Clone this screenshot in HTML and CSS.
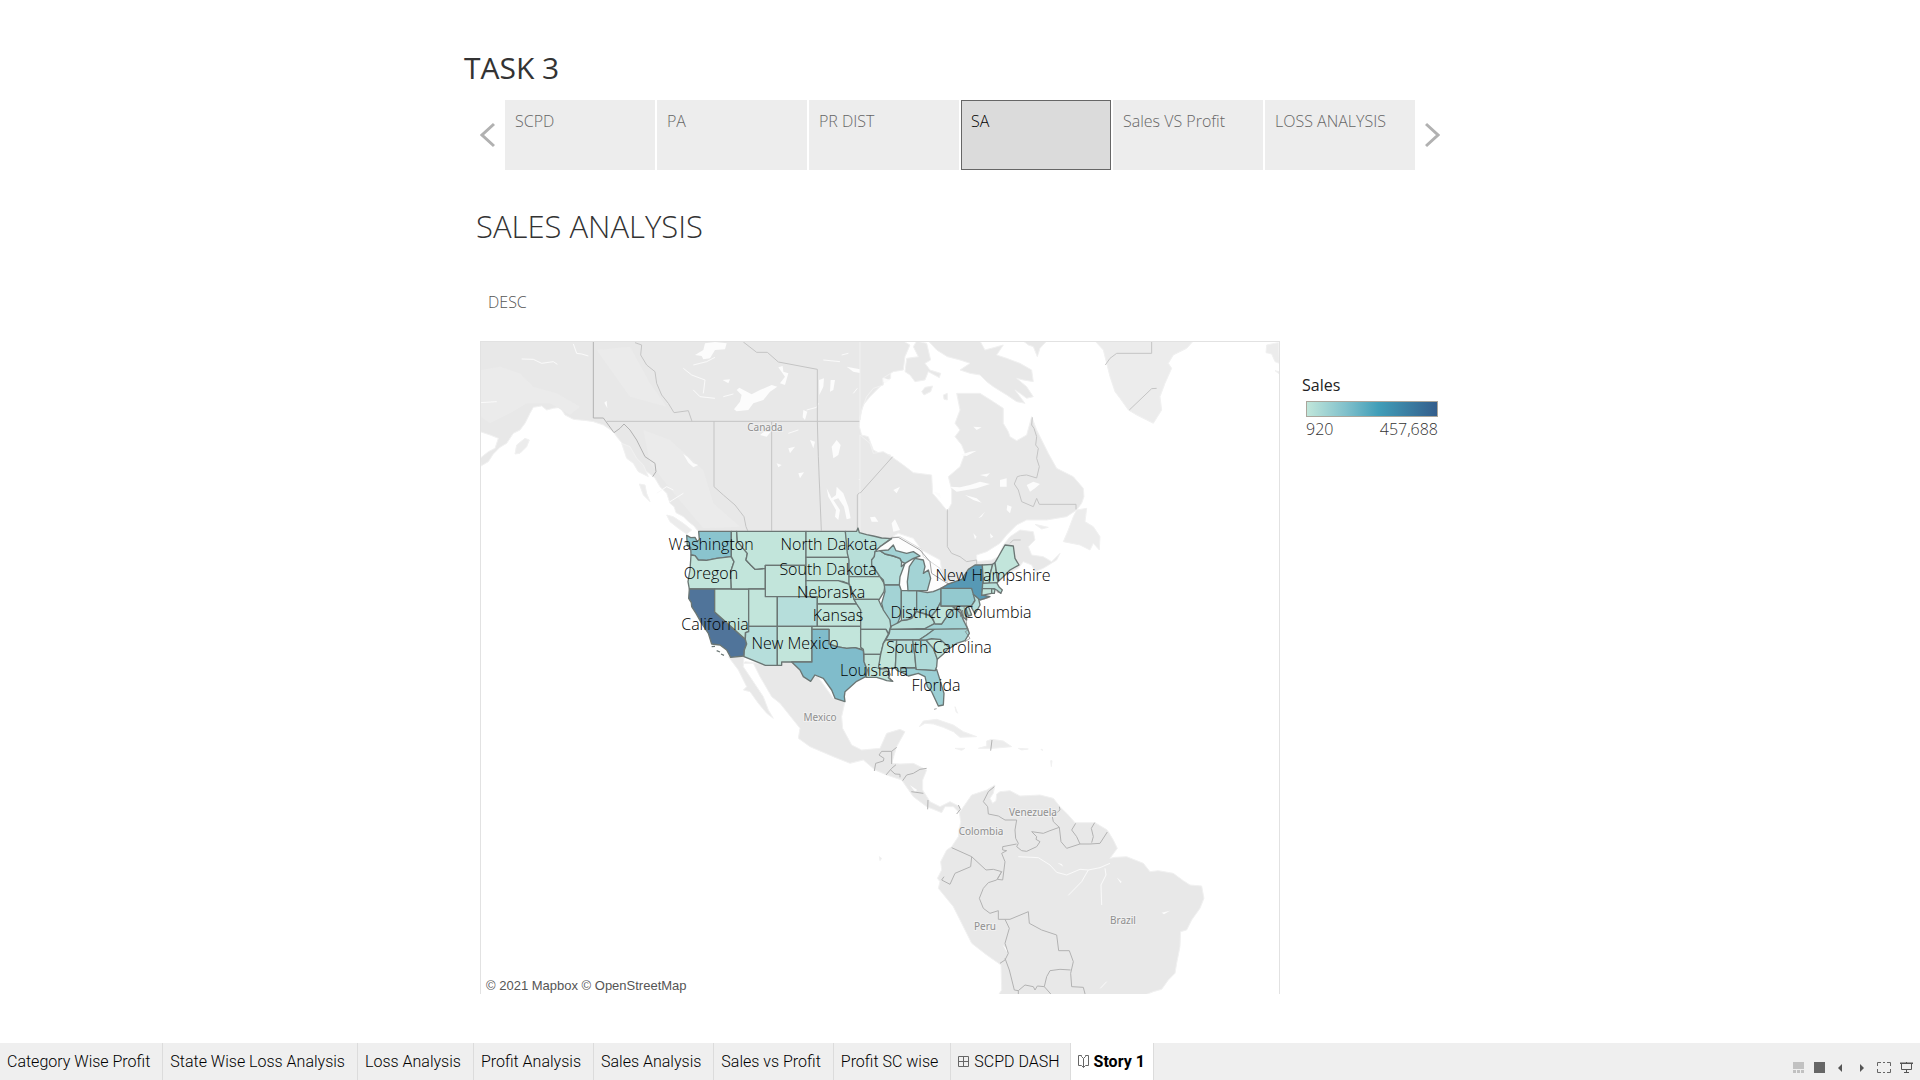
FILE: index.html
```html
<!DOCTYPE html>
<html lang="en">
<head>
<meta charset="utf-8">
<title>Task 3 - Story 1</title>
<link rel="stylesheet" href="styles.css">
</head>
<body>
<main class="story">
  <h1 class="story-title">TASK 3</h1>
  <nav class="points" aria-label="Story points">
    <button class="arrow" aria-label="Previous"><svg width="15" height="26" viewBox="0 0 15 26"><path d="M14 2 2 13 14 24"/></svg></button>
    <div class="point-list">
      <button class="point">SCPD</button>
      <button class="point">PA</button>
      <button class="point">PR DIST</button>
      <button class="point active">SA</button>
      <button class="point">Sales VS Profit</button>
      <button class="point">LOSS ANALYSIS</button>
    </div>
    <button class="arrow" aria-label="Next"><svg width="15" height="26" viewBox="0 0 15 26"><path d="M1 2 13 13 1 24"/></svg></button>
  </nav>
  <section class="dashboard">
    <h2 class="dash-title">SALES ANALYSIS</h2>
    <p class="desc">DESC</p>
    <div class="view">
      <div class="map">
        <svg class="map-svg" viewBox="1 1 798 652" role="img" aria-label="Sales by state">
          <g transform="scale(.33333)">
            <!-- North-west -->
            <g transform="translate(-30 -33)">
              <path class="land" d="M30 33H1262V145L1240 160 1200 200 1180 225 1170 260 1168 290 1175 315 1195 320 1210 360 1225 368 1262 375V640L1160 610 685 605 672 588 655 575 640 560 618 548 612 530 600 520 590 490 570 470 555 445 548 438 530 425 505 415 495 400 470 380 465 350 440 320 430 305 400 285 370 275 350 272 310 268 285 255 270 232 250 235 230 240 215 228 190 232 180 250 165 280 150 300 130 310 110 340 90 352 70 372 55 395 33 408 30 385 55 365 75 355 85 325 60 315 45 310 30 305Z"/>
              <path class="land soft" d="M590 555 610 560 640 580 665 600 650 612 625 595 600 575ZM508 462 525 465 530 490 540 515 520 495ZM140 345 165 325 178 330 170 350 150 370 135 372ZM455 340 480 350 500 385 520 405 535 440 505 425 490 400 470 385Z"/>
              <path class="shade" d="M33 120 90 110 150 130 190 170 260 190 330 230 300 255 240 220 170 220 120 250 60 280 33 260ZM520 300 600 330 700 420 730 520 810 590 700 595 620 500 540 400ZM380 60 480 50 540 160 590 230 480 200Z"/>
              <path class="water" d="M675 75 700 60 705 40 735 36 770 40 765 58 735 60 720 85 700 88 695 78ZM792 238 810 215 815 195 800 180 808 173 845 193 870 180 905 165 922 170 900 185 880 210 850 220 835 240 800 244ZM758 150 780 148 775 160ZM925 112 938 108 940 125 955 130 945 165 930 160 945 140ZM1047 150 1062 145 1060 170 1048 195ZM1082 150 1095 150 1090 180 1080 185ZM1130 110 1170 118 1230 140 1260 150 1245 160 1200 135 1150 125ZM1100 470 1120 490 1135 530 1142 565 1130 568 1122 530 1105 505 1090 510 1110 540 1105 570 1095 560 1098 540 1075 500 1070 475 1085 505 1098 495ZM1085 350 1100 330 1112 345 1105 375 1090 385ZM1020 330 1035 335 1030 355ZM955 355 975 350 960 370ZM1000 240 1012 245 1005 270 998 262ZM403 218 410 212 412 235ZM870 315 895 295 905 302 890 320ZM985 430 1002 427 990 445ZM1165 450 1190 435 1180 450ZM920 400 935 405 925 412ZM640 372 652 380 670 400 685 405 670 412 655 398Z"/>
              <path class="water-line" d="M310 42 320 70 335 72 355 78M155 87 190 88 215 100 250 95 262 103M640 115 665 135 705 150 700 190M670 105 710 95 735 82M670 180 690 200 735 205M760 200 790 192M1010 240 1040 232 1045 220M1060 90 1110 95M1150 190 1162 175M1115 75 1135 70M30 218 80 215M955 310 985 300M560 490 590 470 610 480M600 515 640 490"/>
              <path class="border strong" d="M370 36V264L400 264 432 308 450 295 462 282 480 300 500 330 525 380 555 400 558 425 548 440"/>
              <path class="border" d="M495 38 515 45 512 75 530 105 555 125 560 160 575 195 595 220 612 248 655 242 666 274M410 274H1168M732 274V470L760 495 795 525 822 560 828 590 833 602M905 274V602M820 36 860 67 892 67 925 96 1042 118V274L1045 380 1054 602M1162 602V495L1262 385"/>
            </g>
            <!-- North-east -->
            <g transform="translate(1140 -33)">
              <path class="land" d="M0 33H130L150 45 135 80 130 120 100 125 68 145 70 165 40 175 20 200 5 240 0 270ZM140 85 175 80 160 50 170 33 200 40 212 90 195 100 210 120 242 130 238 143 205 125 195 150 165 155 150 135 135 125ZM185 185 195 172 218 168 212 185 192 195ZM250 195 262 190 262 210 252 208ZM205 33H360L375 60 430 45 410 75 440 85 480 100 515 120 520 155 490 150 470 145 500 170 520 200 500 205 480 190 465 180 495 220 470 215 440 195 400 170 380 155 360 135 330 130 300 120 330 100 300 90 262 80 230 60ZM490 33H560L540 55 532 80 520 50 505 45ZM290 190 360 190 400 215 430 235 430 280 445 305 450 320 470 332 500 315 515 260 530 300 545 330 565 370 590 415 640 440 670 475 672 500 665 520 650 540 620 560 560 570 500 570 470 585 440 615 420 640 380 665 350 675 350 695 395 690 415 680 430 645 450 620 480 600 520 605 525 630 505 650 515 675 550 680 575 695 600 670 590 690 550 715 525 725 515 705 490 695 475 715 400 750 350 730 250 760 245 720 240 690 185 660 160 625 115 610 60 640 0 640V315L30 340 40 370 70 365 95 380 130 405 160 428 215 435 218 490 235 510 262 543 275 520 275 480 265 440 300 410 315 370 305 345 285 320 300 300 285 280 300 240Z"/>
              <path class="land soft" d="M650 540 680 535 675 575 700 590 720 620 718 660 700 640 690 660 660 645 610 635 625 600 640 560ZM525 583 565 592 545 597ZM705 33H1000L980 55 940 75 925 100 935 115 915 160 900 200 905 240 880 280 860 270 830 255 805 240 780 205 765 185 750 140 740 100 730 60ZM1220 45 1255 38 1258 100 1245 95 1235 72 1218 68ZM1245 122 1258 125V132Z"/>
              <path class="water" d="M500 465 520 455 540 462 525 475 510 485ZM220 485 240 490 242 505ZM95 580 105 568 120 600 100 605ZM30 562 45 560 55 575 35 575ZM270 470 300 472 330 465 360 455 390 462 350 475 290 485ZM360 435 390 430 380 440ZM420 450 440 445 440 470 420 470ZM340 290 365 292 350 300ZM355 565 375 545 365 560ZM442 525 455 530 450 550 440 540ZM390 610 400 620 392 625ZM340 610 350 620 345 628ZM300 375 330 365 350 362 320 378ZM315 495 350 505 365 518 340 510ZM100 480 120 470 110 490Z"/>
              <path class="border" d="M98 380 0 490M262 538V650L275 670 300 680 320 695 350 690V703M517 262 515 285 522 295 530 320 527 345 535 355 530 385 538 410 530 444 500 435 482 437 472 440 463 462 475 480 485 515 520 530 530 505 538 523H648V538M450 640 460 630 482 630M736 105 750 85 770 70H875V36M808 240 875 176 890 175"/>
            </g>
            <!-- Central and South America -->
            <g transform="translate(660 897)">
              <path class="land" d="M135 65 220 75 275 60 335 120 350 105 400 175 435 185 425 230 428 265 455 315 485 330 540 325 560 280 600 268 615 275 590 320 575 370 600 372 640 370 670 385 680 390 668 420 668 450 690 485 720 500 750 485 780 500 778 518 760 500 735 500 725 518 700 508 680 500 640 470 605 420 560 405 525 390 490 360 450 370 400 350 330 320 295 295 300 265 240 190 215 170 180 110 160 70 130 70ZM85 50H132L130 80 150 110 190 170 205 210 220 235 200 220 175 190 150 155 130 150 140 140 115 90Z"/>
              <path class="land soft" d="M658 260 670 243 710 238 760 255 790 275 830 290 780 292 760 275 730 262 700 252 675 250ZM860 303 875 298 910 303 935 320 880 325 835 325 860 318ZM765 325 795 325 785 331ZM955 325 985 327 965 330ZM765 200 773 220 768 215ZM1023 328 1027 328 1027 332ZM538 650 545 655 540 662ZM1052 362 1056 362 1054 380Z"/>
              <path class="land" d="M778 518 815 465 860 450 885 435 880 460 870 475 878 490 888 482 890 462 900 455 930 452 960 468 1020 465 1060 475 1080 500 1105 525 1125 548 1185 548 1222 570 1240 600 1252 625 1230 655 1245 652 1280 650 1330 670 1350 695 1375 692 1420 700 1450 722 1470 735 1505 738 1512 775 1500 805 1475 840 1460 870 1442 875 1440 920 1430 970 1425 1000 1405 1020 1385 1048 1360 1055 1335 1065H895L905 1050 903 975 860 945 815 910 795 870 760 800 715 745 720 725 712 715 725 690 722 665 740 630 755 620 775 590 782 545Z"/>
              <path class="water" d="M630 436 652 450 645 455ZM1072 668 1085 672 1090 680ZM1250 712 1265 725 1262 730ZM908 915 925 930 920 935ZM1385 818 1410 812 1392 823Z"/>
              <path class="water-line" d="M955 650 1015 653 1050 675 1070 697 1100 705 1140 688 1165 690 1200 683 1230 670M1165 690 1145 725 1105 766M1215 685 1218 705 1203 735 1205 795M1201 1045 1220 1025"/>
              <path class="border strong" d="M523 393 527 370 550 363 552 355 537 345 545 334H575V372M575 334 590 322M558 405 575 385 588 374M572 390 585 402 600 403V412M608 422 620 405 640 400 660 388 680 385M634 455 670 460M684 480 683 508M775 495 781 508 770 522M876 300 872 332M883 440 865 455 850 485 863 500 865 522 895 528 915 540H950L945 570 947 595 955 610 950 620 965 632 980 634 1010 620 1020 605 1008 598 1010 590 995 575 1030 580 1050 572 1078 562 1060 545 1057 530 1080 510 1078 500M1078 562 1083 605 1100 625 1140 612 1130 590 1115 570 1127 550M1140 612H1170L1200 610 1222 576M1175 608 1180 590 1174 565 1184 548M950 612 908 620V630L920 632 905 640 915 665 908 720 892 718 905 695 880 688 858 690 815 650 755 623M815 650 812 680 765 700 750 733 725 720 732 710M905 695 890 720 865 728 850 745 838 775 850 805 870 820 895 812V838H930L985 815 988 850 1025 870 1070 885 1076 932H1108L1120 965 1112 1000 1115 1040 1150 1042 1156 1065M915 838 928 865 915 910 925 940 915 960 900 970M915 955 928 990 943 1050 955 1052 975 1035 1000 1040 1005 1050 1012 1038 1033 1040 1040 1010 1050 992 1080 988 1112 990M1033 1040 1055 1065M955 1052V1065"/>
            </g>
            <!-- Great Lakes -->
            <g transform="translate(1080 507)" class="lake">
              <path d="M105 125 125 105 155 85 180 80 245 118 250 140 300 175 325 222 300 240 262 246 205 244 180 240 178 200 130 130Z"/>
            </g>
            <!-- Western states -->
            <g class="states" transform="translate(540 507)">
              <path fill="#8ac4ce" d="M80 76 92 83 105 82 112 95 118 88 116 64H214V140L170 145 140 151 115 150 105 137 93 135 92 112 82 108Z"/>
              <path d="M93 135 105 137 115 150 140 151 170 145 214 140 222 155 212 185 214 237H88L84 215 90 180Z"/>
              <path fill="#50749a" d="M88 237H164V306L256 388 260 402 253 420 252 438 212 442 200 420 180 405 155 402 145 370 125 340 108 310 95 290 94 278 86 265Z"/>
              <path d="M164 237H266V365L256 368 256 388 164 306Z"/>
              <path d="M214 64H230L232 95 245 110 262 130 258 150 272 165 285 178 316 175V237H214L212 185 222 155 214 140Z"/>
              <path d="M230 64H438V166H316V175L285 178 272 165 258 150 262 130 245 110 232 95Z"/>
              <path d="M316 166H438V260H316Z"/>
              <path d="M266 237H316V260H352V349H266Z"/>
              <path fill="#b6dedb" d="M352 260H472V349H352Z"/>
              <path fill="#b6dedb" d="M266 349H352V466H316L252 440 253 420 260 402 256 388 257 368 266 365Z"/>
              <path d="M352 349H456V456H365V466H352Z"/>
              <path d="M438 64H556L562 100 568 142H438Z"/>
              <path d="M438 142H568V200L567 222 548 214 535 214H438Z"/>
              <path d="M438 212H535L548 216 567 222 575 250 590 282H472V260H438Z"/>
              <path d="M472 282H590L602 300V349H472Z"/>
              <path d="M456 349H602V370L606 418 585 413 560 415 530 410 507 402V358H456Z"/>
              <path fill="#80bccb" d="M456 358H507V402L530 410 560 415 585 413 610 421 612 450 620 480 617 500 590 514 575 527 555 545 553 560 555 575 525 565 515 540 490 505 465 495 452 514 430 500 420 480 395 456H456Z"/>
              <path fill="#50749a" d="M155 410 165 409M170 422 180 426M183 432 192 436"/>
            </g>
            <!-- Eastern states -->
            <g class="states" transform="translate(1080 507)">
              <path fill="#b8dfd9" d="M16 64H50L54 54 58 68 80 74 100 78 125 84 155 86 120 110 105 125 103 140 95 150 95 165 110 185 120 200H27V150L22 130Z"/>
              <path d="M27 200H120L135 225 132 245 118 268H42L35 240 27 220Z"/>
              <path fill="#bce1da" d="M42 268H115L125 290 150 325 153 345 150 358 145 372 138 358H62V300L50 282Z"/>
              <path d="M62 358H138L145 372 130 400 122 433H72L70 418 62 412Z"/>
              <path d="M72 433H122L120 455 115 475H145L150 495 145 503 158 514 140 512 130 508 110 502 78 502 82 480 72 455Z"/>
              <path fill="#b5dedb" d="M95 150 103 140 105 125 120 122 135 132 160 138 180 145 185 155 184 170 195 160 180 200 178 225H133L130 210 120 200 110 185 95 165Z"/>
              <path fill="#a3d3d5" d="M133 225H178L184 242V310L175 335 165 350 152 348 150 330 130 300 125 280 135 245Z"/>
              <path fill="#add9d8" d="M184 242H230V302L215 325 200 330 184 332Z"/>
              <path fill="#a3d3d5" d="M230 242 262 248 280 245 303 235V275L290 300 275 318 255 312 230 305Z"/>
              <path fill="#a3d3d5" d="M120 122 145 120 160 105 168 122 200 130 220 125 240 138 220 145 195 160 185 155 180 145 160 138 135 132ZM204 242 202 215 208 170 218 155 225 145 250 150 255 170 250 190 265 180 272 205 262 242Z"/>
              <path fill="#b8dfd9" d="M150 358 155 348 175 338 184 332 200 330 215 325 230 305 255 312 272 318 285 340 260 355Z"/>
              <path fill="#b5dedb" d="M150 358H285L260 375 237 390H137L148 370Z"/>
              <path d="M137 390H170L166 475H145L115 475 122 433 130 400Z"/>
              <path fill="#b8dfd9" d="M170 390H218L225 440 228 472 182 474V486L172 482 166 475Z"/>
              <path fill="#b0dbd9" d="M218 390H258L280 415 292 445 290 470 285 482 228 478 225 440Z"/>
              <path fill="#9ccfd4" d="M182 474H228V478L285 482 290 478 300 510 312 550 310 585 295 588 275 545 262 530 255 500 235 490 205 498 182 485Z"/>
              <path d="M258 390 275 386 300 388 332 408 310 432 292 448 280 415Z"/>
              <path fill="#a8d6d7" d="M237 390 260 375 285 356H383L388 370 375 392 350 400 330 415 300 388 275 386 258 390Z"/>
              <path fill="#a3d3d5" d="M250 358 285 340 305 342 320 320 335 300 348 296 362 310 370 330 383 356Z"/>
              <path d="M275 318 290 300 303 275V288H335L348 296 335 300 320 320 305 342 285 342Z"/>
              <path fill="#b8dfd9" d="M335 288H385L395 315 385 318 378 295 380 330 370 322 362 300 348 296Z"/>
              <path fill="#93c9cf" d="M303 235H395L402 250 405 270 395 288H303Z"/>
              <path fill="#b5dedb" d="M400 253 415 262 420 285 405 312 393 290 405 272Z"/>
              <path fill="#5799b5" d="M303 235 325 222 365 208 385 178 405 165H427L430 205 426 255 450 260 420 270 400 253 395 235Z"/>
              <path d="M427 165 458 163 450 195 448 220H430Z"/>
              <path d="M458 163 465 158 470 195 474 215 470 220H448L450 195Z"/>
              <path d="M465 158 478 135 495 105 520 108 525 145 537 165 510 180 490 200 474 215 470 190Z"/>
              <path fill="#b8dfd9" d="M428 220 470 218 478 232 487 240 482 250 470 240 462 236H427Z"/>
              <path d="M427 236H455V250L425 256ZM455 236 465 238 463 250 455 250Z"/>
            </g>
            <g class="coast" transform="translate(1080 507)">
              <path d="M110 118 155 82 175 82 240 120 270 155 275 190 325 222 300 236M340 290 352 300 358 292 362 320 368 300 372 335M372 290 376 315 380 345 384 360 376 365 390 385 375 395M470 245 485 250M448 262 430 268M282 598 290 596M118 478 140 480 150 505 160 514"/>
            </g>
          </g>
          <g class="place">
            <text x="285" y="90">Canada</text>
            <text x="340" y="380">Mexico</text>
            <text x="553" y="475">Venezuela</text>
            <text x="501" y="494">Colombia</text>
            <text x="505" y="589">Peru</text>
            <text x="643" y="583">Brazil</text>
          </g>
          <g class="mark">
            <text x="231" y="209">Washington</text>
            <text x="349" y="209">North Dakota</text>
            <text x="231" y="238">Oregon</text>
            <text x="348" y="234">South Dakota</text>
            <text x="351" y="257">Nebraska</text>
            <text x="358" y="280">Kansas</text>
            <text x="235" y="289">California</text>
            <text x="315" y="308">New Mexico</text>
            <text x="394" y="335">Louisiana</text>
            <text x="513" y="240">New Hampshire</text>
            <text x="481" y="277">District of Columbia</text>
            <text x="459" y="312">South Carolina</text>
            <text x="456" y="350">Florida</text>
          </g>
          <text class="credit" x="6" y="649">© 2021 Mapbox © OpenStreetMap</text>
        </svg>
      </div>
      <aside class="legend">
        <h3 class="legend-title">Sales</h3>
        <div class="ramp"></div>
        <div class="range"><span>920</span><span>457,688</span></div>
      </aside>
    </div>
  </section>
</main>
<footer class="sheets">
  <nav class="sheet-tabs" aria-label="Sheets">
    <a class="sheet" href="#">Category Wise Profit</a>
    <a class="sheet" href="#">State Wise Loss Analysis</a>
    <a class="sheet" href="#">Loss Analysis</a>
    <a class="sheet" href="#">Profit Analysis</a>
    <a class="sheet" href="#">Sales Analysis</a>
    <a class="sheet" href="#">Sales vs Profit</a>
    <a class="sheet" href="#">Profit SC wise</a>
    <a class="sheet with-icon" href="#"><svg width="12" height="13" viewBox="0 0 12 13"><path d="M.5 1.5h10v10H.5zM5.5 1.5v10M.5 6.5h10"/></svg>SCPD DASH</a>
    <a class="sheet with-icon current" href="#"><svg width="12" height="13" viewBox="0 0 12 13"><path d="M5.500 12.500V3.500L3.500 1.500V.5H.5V10.500H3.500L5.500 12.500 7.500 10.500H10.500V.5H7.500V1.500L5.500 3.500"/></svg>Story 1</a>
  </nav>
  <div class="tools">
    <button class="tool" aria-label="Show filmstrip"><svg width="12" height="12" viewBox="0 0 12 12"><path fill="#c1c1c1" d="M0 0h11v7H0zM0 8h3v3H0zM4 8h3v3H4zM8 8h3v3H8z"/></svg></button>
    <button class="tool" aria-label="Show sheet tabs"><svg width="12" height="12" viewBox="0 0 12 12"><path fill="#666" d="M0 0h11v11H0z"/></svg></button>
    <button class="tool" aria-label="Previous sheet"><svg width="12" height="12" viewBox="0 0 12 12"><path fill="#555" d="M7 2v8L3 6z"/></svg></button>
    <button class="tool" aria-label="Next sheet"><svg width="12" height="12" viewBox="0 0 12 12"><path fill="#555" d="M4 2v8l4-4z"/></svg></button>
    <button class="tool" aria-label="Full screen"><svg width="14" height="12" viewBox="0 0 14 12"><path fill="none" stroke="#666" d="M.5 4V.5H4M10 .5h3.500V4M13.500 7v3.500H10M4 10.500H.5V7M6 .5h2M6 10.500h2"/></svg></button>
    <button class="tool" aria-label="Presentation mode"><svg width="14" height="12" viewBox="0 0 14 12"><path fill="none" stroke="#555" d="M0 1.500h13M1.500 2v5.500h10V2M6.500 8v3M4 10.500h5M6.500 0v1"/><path stroke="#555" d="M0 1h13"/></svg></button>
  </div>
</footer>
</body>
</html>
```

FILE: styles.css
```css
* { box-sizing: border-box; }

body {
  margin: 0;
  min-height: 100vh;
  display: flex;
  flex-direction: column;
  background: #fff;
  color: #333;
  font-family: "Open Sans", "Noto Sans", sans-serif;
}

h1, h2, h3, p { margin: 0; font-weight: 300; }

button {
  border: 0;
  padding: 0;
  background: none;
  font: inherit;
  color: inherit;
}

.story {
  width: 100%;
  max-width: 992px;
  margin: 0 auto;
  padding-top: 46px;
  flex: 1;
}

.story-title {
  font-size: 30px;
  line-height: 44px;
  font-weight: 400;
}

.points {
  display: flex;
  align-items: center;
  gap: 10px;
  margin-top: 10px;
  padding: 0 16px;
}

.arrow { display: flex; }

.arrow path {
  fill: none;
  stroke: #b1b1b1;
  stroke-width: 3;
}

.point-list {
  flex: 1;
  display: grid;
  grid-template-columns: repeat(6, 1fr);
  gap: 2px;
}

.point {
  display: flex;
  height: 70px;
  padding: 9px 10px;
  background: #ededed;
  color: #666;
  font-size: 16px;
  font-weight: 300;
  line-height: 24px;
}

.point.active {
  padding: 8px 9px;
  border: 1px solid #666;
  background: #dbdbdb;
  color: #000;
}

.dashboard { padding: 0 16px; }

.dash-title {
  margin: 34px 0 0 -4px;
  font-size: 31px;
  line-height: 44px;
}

.desc {
  margin: 42px 0 0 8px;
  color: #555;
  font-size: 16px;
  line-height: 24px;
}

.view {
  display: flex;
  gap: 22px;
  margin-top: 27px;
}

.map {
  flex: 1;
  border: 1px solid #e2e2e2;
  border-bottom: 0;
}

.map-svg { display: block; width: 100%; }

.land { fill: #e8e8e8; stroke: #f1f1f1; stroke-width: 3; }
.soft { fill: #ececec; }
.shade { fill: #ebebeb; }
.water { fill: #fcfcfc; }
.water-line { fill: none; stroke: #fafafa; stroke-width: 3; }
.border { fill: none; stroke: #c4c4c4; stroke-width: 3; }
.border.strong { stroke: #b2b2b2; }
.lake { fill: #fdfdfd; stroke: #ddd; stroke-width: 3; }
.states { fill: #c2e5db; stroke: #6b7674; stroke-width: 4; stroke-linejoin: round; }
.coast { fill: none; stroke: #777; stroke-width: 2; }

.place {
  fill: #8f8f8f;
  stroke: #f0f0f0;
  stroke-width: 2px;
  paint-order: stroke;
  font-family: "Noto Sans", sans-serif;
  font-size: 10px;
  text-anchor: middle;
}

.mark {
  fill: #000;
  font-size: 16px;
  font-weight: 300;
  text-anchor: middle;
}

.credit {
  fill: #555;
  font-family: "Liberation Sans", sans-serif;
  font-size: 13px;
}

.legend { width: 138px; padding-top: 32px; }

.legend-title {
  color: #222;
  font-size: 16px;
  font-weight: 400;
  line-height: 24px;
}

.ramp {
  height: 16px;
  margin: 4px 2px 0 4px;
  border: 1px solid #aaa69c;
  background: linear-gradient(90deg, #c0e6da, #80c0cb 30%, #419eb8 55%, #345e8c);
}

.range {
  display: flex;
  justify-content: space-between;
  margin: 0 2px 0 4px;
  font-size: 16px;
  font-weight: 300;
  line-height: 24px;
}

.sheets {
  display: flex;
  justify-content: space-between;
  background: #efefef;
}

.sheet-tabs { display: flex; }

.sheet {
  display: flex;
  align-items: center;
  height: 37px;
  padding: 0 12px 0 7px;
  border-right: 1px solid #dcdcdc;
  color: #000;
  font-family: Roboto, sans-serif;
  font-size: 16px;
  font-weight: 300;
  text-decoration: none;
}

.with-icon { gap: 4px; padding-right: 10px; }
.with-icon path { fill: none; stroke: #666; }

.current {
  padding-right: 8px;
  background: #fff;
  font-weight: 700;
}

.tools {
  display: flex;
  align-items: flex-end;
  gap: 9px;
  padding: 0 6px 6px 0;
}

.tool { display: flex; }
```
